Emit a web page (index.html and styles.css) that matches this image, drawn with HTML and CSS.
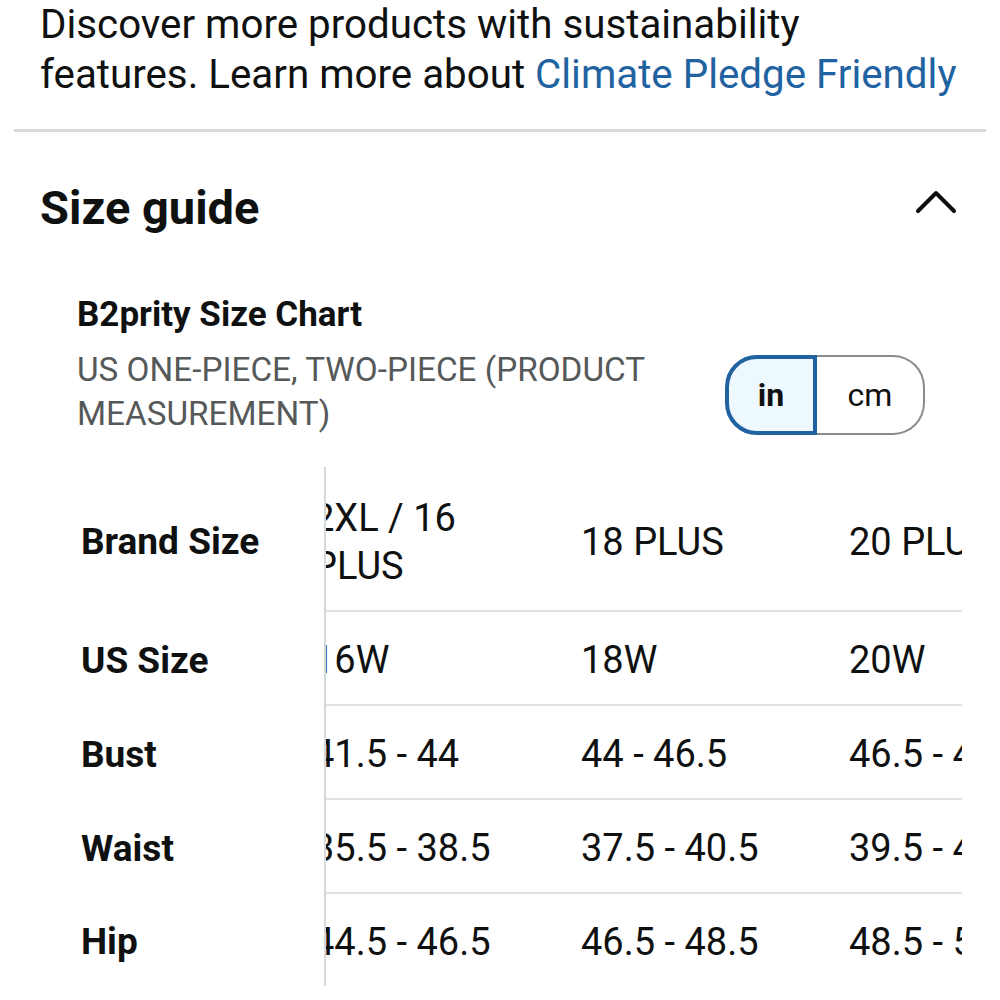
FILE: index.html
```html
<!DOCTYPE html>
<html lang="en">
<head>
<meta charset="utf-8">
<title>Size guide</title>
<link rel="stylesheet" href="styles.css">
</head>
<body>
<main class="page">
  <p class="notice">Discover more products with sustainability<br>features. Learn more about <a class="link" href="#">Climate Pledge Friendly</a></p>
  <hr class="divider">
  <section class="guide">
    <header class="guide-head">
      <h2 class="guide-title">Size guide</h2>
      <svg class="chevron" width="44" height="24" viewBox="0 0 44 24" aria-hidden="true"><path d="M4 21 L22 3 L40 21" fill="none" stroke="#0f1111" stroke-width="4" stroke-linecap="round" stroke-linejoin="round"/></svg>
    </header>
    <div class="chart">
      <h3 class="chart-title">B2prity Size Chart</h3>
      <div class="chart-meta">
        <p class="chart-sub">US ONE-PIECE, TWO-PIECE (PRODUCT MEASUREMENT)</p>
        <div class="unit-toggle">
          <span class="unit unit-active">in</span>
          <span class="unit unit-plain">cm</span>
        </div>
      </div>
      <div class="table">
        <div class="row row-head">
          <div class="label">Brand Size</div>
          <div class="values">
            <div class="track">
              <div class="cell">2XL / 16 PLUS</div>
              <div class="cell">18 PLUS</div>
              <div class="cell">20 PLUS</div>
            </div>
          </div>
        </div>
        <div class="row">
          <div class="label">US Size</div>
          <div class="values">
            <div class="track">
              <div class="cell">16W</div>
              <div class="cell">18W</div>
              <div class="cell">20W</div>
            </div>
          </div>
        </div>
        <div class="row">
          <div class="label">Bust</div>
          <div class="values">
            <div class="track">
              <div class="cell">41.5 - 44</div>
              <div class="cell">44 - 46.5</div>
              <div class="cell">46.5 - 49</div>
            </div>
          </div>
        </div>
        <div class="row">
          <div class="label">Waist</div>
          <div class="values">
            <div class="track">
              <div class="cell">35.5 - 38.5</div>
              <div class="cell">37.5 - 40.5</div>
              <div class="cell">39.5 - 42.5</div>
            </div>
          </div>
        </div>
        <div class="row row-last">
          <div class="label">Hip</div>
          <div class="values">
            <div class="track">
              <div class="cell">44.5 - 46.5</div>
              <div class="cell">46.5 - 48.5</div>
              <div class="cell">48.5 - 50.5</div>
            </div>
          </div>
        </div>
      </div>
    </div>
  </section>
</main>
</body>
</html>
```
FILE: styles.css
```css
* { box-sizing: border-box; }
html, body { margin: 0; padding: 0; background: #fff; }
body {
  font-family: Roboto, "Noto Sans", "Liberation Sans", sans-serif;
  color: #0f1111;
  width: 1000px;
  height: 1000px;
  overflow: hidden;
}
.page { display: flex; flex-direction: column; }

.notice {
  margin: 0;
  padding: 0 20px 0 40px;
  font-size: 40.3px;
  line-height: 50px;
}
.link { color: #2162a1; text-decoration: none; }

.divider {
  margin: 29px 14px 0;
  border: 0;
  height: 3px;
  background: #d5d9d9;
}

.guide-head {
  margin-top: 46px;
  height: 60px;
  padding: 0 42px 0 40px;
  display: flex;
  align-items: center;
  justify-content: space-between;
}
.guide-title {
  margin: 0;
  font-size: 47px;
  font-weight: 700;
  line-height: 60px;
}
.chevron { margin-bottom: 12px; }

.chart { padding: 0 38px 0 77px; }
.chart-title {
  margin: 55px 0 0;
  font-size: 35px;
  font-weight: 700;
  line-height: 44px;
}
.chart-meta {
  margin-top: 11px;
  display: flex;
  align-items: flex-start;
  gap: 20px;
}
.chart-sub {
  flex: 1;
  margin: 0;
  font-size: 33.3px;
  line-height: 44px;
  color: #565959;
}
.unit-toggle {
  margin: 7px 37px 0 0;
  display: flex;
  height: 80px;
}
.unit {
  display: flex;
  align-items: center;
  justify-content: center;
  font-size: 32px;
}
.unit-active {
  width: 92px;
  border: 4px solid #2162a1;
  border-radius: 32px 0 0 32px;
  background: #edf8ff;
  font-weight: 700;
}
.unit-plain {
  width: 108px;
  border: 2px solid #888c8c;
  border-left: 0;
  border-radius: 0 32px 32px 0;
  background: #fff;
}

.table { margin-top: 31px; display: flex; flex-direction: column; }
.row { display: flex; }
.label {
  flex: 0 0 249px;
  padding: 3px 0 0 4px;
  border-right: 2px solid #d5d9d9;
  display: flex;
  align-items: center;
  font-size: 37px;
  font-weight: 700;
  background: #fff;
}
.values {
  flex: 1;
  overflow: hidden;
  border-bottom: 2px solid #dfe2e2;
}
.row-last .values { border-bottom: 0; }
.track { display: flex; margin-left: -13px; }
.cell {
  flex: 0 0 268px;
  padding: 24px 60px 20px 0;
  font-size: 38px;
  line-height: 48px;
}
.row-head .cell { padding-top: 27px; padding-bottom: 20px; display: flex; align-items: center; }
```
